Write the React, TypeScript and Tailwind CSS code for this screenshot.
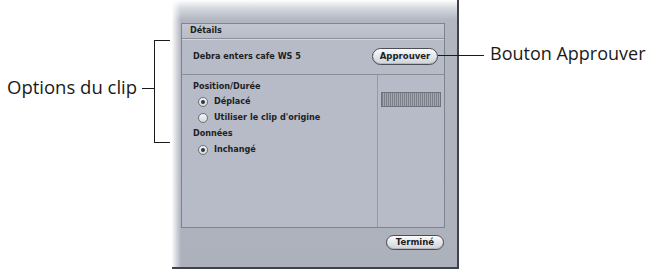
const Radio = ({ checked }: { checked?: boolean }) => (
  <span className="flex h-[10px] w-[10px] items-center justify-center rounded-full border border-[#6b6f78] bg-[linear-gradient(to_bottom,#f4f5f7,#d5d8de)]">
    {checked && <span className="h-[4px] w-[4px] rounded-full bg-[#33363c]" />}
  </span>
);

const PillButton = ({ label, className }: { label: string; className?: string }) => (
  <button
    className={
      'flex items-center justify-center rounded-full border border-[#4a4d54] bg-[linear-gradient(to_bottom,#fbfbfc,#e2e4e8_55%,#cfd2d8)] text-[9.5px] font-bold text-[#1d1f23] shadow-[inset_0_-1px_0_#b5b8bf] ' +
      (className ?? '')
    }
  >
    {label}
  </button>
);

export default function App() {
  return (
    <div className="relative flex h-[276px] w-[653px] overflow-hidden bg-white font-['DejaVu_Sans_Condensed','DejaVu_Sans',sans-serif]">
      {/* left annotation */}
      <div className="relative w-[172px] shrink-0">
        <p className="absolute left-[7px] top-[75px] font-['Open_Sans',sans-serif] text-[18.5px] leading-[24px] text-[#1a1a1a]">
          Options du clip
        </p>
        <div className="absolute left-[142px] top-[88px] h-px w-[13px] bg-[#1a1a1a]" />
        <div className="absolute left-[154px] top-[40px] h-[103px] w-[16px] border-y border-l border-[#1a1a1a]" />
      </div>

      {/* dialog panel */}
      <div className="relative h-[269px] w-[287px] shrink-0 border-r-2 border-b-2 border-[#3f4248] bg-[linear-gradient(to_right,rgba(255,255,255,0.95),rgba(255,255,255,0)_9px),linear-gradient(to_bottom,#ffffff,#d6d9df_8px,#b2b6c1_20px,#adb1bc)] pl-[9px] pt-[23px]">
        <div className="flex h-[205px] w-[264px] flex-col border border-[#7f838c] bg-[#b6bbc7]">
          <div className="flex h-[15px] items-center border-b border-[#8b8f98] bg-[linear-gradient(to_bottom,#c3c7d1,#b7bcc7)] pl-[8px] text-[9px] font-bold text-[#1d1f23] shadow-[0_1px_0_#d2d5dc]">
            Détails
          </div>
          <div className="flex h-[36px] items-center justify-between border-b border-[#8b8f98] pl-[11px] pr-[6px]">
            <span className="text-[9px] font-bold text-[#1d1f23]">Debra enters cafe WS 5</span>
            <PillButton label="Approuver" className="h-[17px] w-[66px]" />
          </div>
          <div className="flex flex-1">
            <div className="flex w-[196px] flex-col border-r border-[#959aa4] pl-[11px] pt-[4px] text-[9px] font-bold text-[#1d1f23]">
              <span className="h-[15px] leading-[15px]">Position/Durée</span>
              <div className="flex h-[16px] items-center gap-[6px] pl-[5px]">
                <Radio checked />
                <span>Déplacé</span>
              </div>
              <div className="flex h-[16px] items-center gap-[6px] pl-[5px]">
                <Radio />
                <span>Utiliser le clip d'origine</span>
              </div>
              <span className="h-[15px] leading-[15px]">Données</span>
              <div className="flex h-[18px] items-center gap-[6px] pl-[5px]">
                <Radio checked />
                <span>Inchangé</span>
              </div>
            </div>
            <div className="flex-1 px-[3px] pt-[17px]">
              <div className="h-[15px] w-full border border-[#6e727b] bg-[repeating-linear-gradient(to_right,#7c8089_0px,#7c8089_1px,#a2a6af_1px,#a2a6af_2px)]" />
            </div>
          </div>
        </div>
        <div className="flex justify-end pr-[13px] pt-[7px]">
          <PillButton label="Terminé" className="h-[15px] w-[58px]" />
        </div>
      </div>

      {/* right annotation */}
      <div className="relative flex-1">
        <div className="absolute left-[-21px] top-[55px] h-px w-[46px] bg-[#1a1a1a]" />
        <p className="absolute left-[31px] top-[41px] font-['Open_Sans',sans-serif] text-[18px] leading-[24px] text-[#1a1a1a]">
          Bouton Approuver
        </p>
      </div>
    </div>
  );
}
